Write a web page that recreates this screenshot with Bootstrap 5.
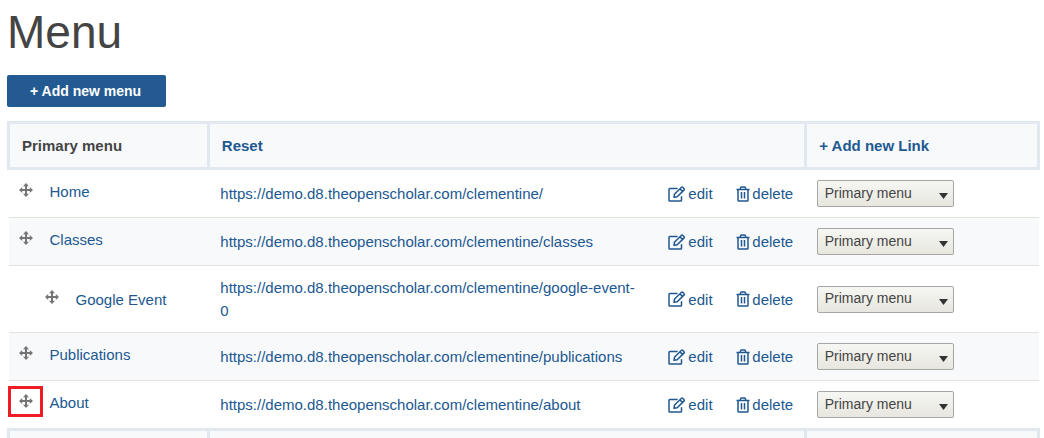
<!DOCTYPE html>
<html lang="en">
<head>
<meta charset="utf-8">
<meta name="viewport" content="width=device-width, initial-scale=1">
<title>Menu</title>
<link href="https://cdn.jsdelivr.net/npm/bootstrap@5.3.0/dist/css/bootstrap.min.css" rel="stylesheet">
<style>
  body { font: 15px/23px "Liberation Sans", Arial, sans-serif; color: #444; background: #fff; }
  main { padding: 5px 4px 0 7px; }
  h1 { font-size: 46px; font-weight: 400; line-height: 54px; }
  a, a:hover { color: #205891; text-decoration: none; }
  .btn-add, .btn-add:hover { background: #235a91; border: 0; border-radius: 2px; color: #fff; font-size: 14px; font-weight: 700; line-height: 20px; padding: 6px 25px 6px 23px; }
  .toolbar { margin-bottom: 14px; }
  .menu-table { border-collapse: collapse; table-layout: fixed; margin: 0; }
  .menu-table th { border: 3px solid #e1e8f0; background: #f8f9fb; padding: 10px 12px; height: 46px; vertical-align: middle; }
  .menu-table td { padding: 10px 0 10px 12px; vertical-align: middle; }
  .menu-table td:nth-child(2) { padding-right: 14px; overflow-wrap: break-word; }
  .menu-table td:last-child { padding-left: 11px; }
  .menu-table tbody tr + tr td { border-top: 1px solid #e2e2de; }
  .menu-table tbody tr:nth-child(even) td { background: #f8f9fb; }
  .menu-table tbody td:first-child { padding-left: 10px; }
  .menu-table tbody .top { vertical-align: top; }
  .menu-table tbody td.indent { padding-left: 36px; }
  .col-title { width: 19.4%; }
  .col-url { width: 43.5%; }
  .col-edit { width: 6.6%; }
  .col-delete { width: 7.9%; }
  .handle { width: 14px; height: 14px; margin: 0 17px 4px 0; color: #757575; }
  .handle svg, .action svg { display: block; flex: none; }
  .action { gap: 2px; }
  .marked::after { content: ""; position: absolute; inset: -8px -10px -9px -11px; border: 3px solid #ee1c25; }
  .parent { width: 137px; height: 27px; padding: 0 7px 2px; border: 1px solid #a6a6a6; border-radius: 2px; color: #444; font-size: 14px; line-height: 20px; appearance: none;
    background: url("data:image/svg+xml,%3Csvg xmlns='http://www.w3.org/2000/svg' width='9' height='6'%3E%3Cpath d='M0 0h9L4.500 6z' fill='%23333'/%3E%3C/svg%3E") no-repeat right 5px top 12px, linear-gradient(#f6f6f3, #e7e7df); display: block; }
</style>
</head>
<body class="vh-100 overflow-hidden">
<svg class="d-none" aria-hidden="true">
  <symbol id="move" viewBox="0 0 14 14"><path fill="currentColor" d="M7 0l3 3.200H8V6h2.800V4L14 7l-3.200 3V8H8v2.800h2L7 14l-3-3.200h2V8H3.200v2L0 7l3.200-3v2H6V3.200H4z"/></symbol>
  <symbol id="pen" viewBox="0 0 18 16"><g fill="none" stroke="currentColor" stroke-width="1.500" stroke-linejoin="round" stroke-linecap="round"><path d="M9 2.500H1.800Q1 2.500 1 3.300v10.900q0 .8.800.8h10.900q.8 0 .8-.8v-3.500"/><path d="M6 11.300l.6-3.300 6.700-6.500q.8-.8 1.600 0l1 1q.8.8 0 1.600L9.200 10.700zM12 2.900l2.400 2.400"/></g></symbol>
  <symbol id="trash" viewBox="0 0 14 16"><path fill="none" stroke="currentColor" stroke-width="1.500" stroke-linejoin="round" d="M.5 3.500h13M4 3.300L5 1h4l1 2.300M2 3.500v10.700q0 .8.800.8h8.400q.8 0 .8-.8V3.500M5.500 6v6.500M8.500 6v6.500"/></symbol>
</svg>
<main>
  <h1 class="mb-3">Menu</h1>
  <div class="toolbar d-flex"><button type="button" class="btn btn-add">+ Add new menu</button></div>
  <table class="menu-table w-100">
    <colgroup><col class="col-title"><col class="col-url"><col class="col-edit"><col class="col-delete"><col></colgroup>
    <thead>
      <tr><th scope="col">Primary menu</th><th colspan="3"><a href="#">Reset</a></th><th><a href="#">+ Add new Link</a></th></tr>
    </thead>
    <tbody>
      <tr>
        <td class="top"><div class="d-flex align-items-center"><span class="handle"><svg width="14" height="14"><use href="#move"/></svg></span><a href="#">Home</a></div></td>
        <td><a href="#">https://demo.d8.theopenscholar.com/clementine/</a></td>
        <td><a href="#" class="action d-flex align-items-center"><svg width="18" height="16"><use href="#pen"/></svg>edit</a></td>
        <td><a href="#" class="action d-flex align-items-center"><svg width="14" height="16"><use href="#trash"/></svg>delete</a></td>
        <td><select class="parent" aria-label="Menu for Home"><option>Primary menu</option></select></td>
      </tr>
      <tr>
        <td class="top"><div class="d-flex align-items-center"><span class="handle"><svg width="14" height="14"><use href="#move"/></svg></span><a href="#">Classes</a></div></td>
        <td><a href="#">https://demo.d8.theopenscholar.com/clementine/classes</a></td>
        <td><a href="#" class="action d-flex align-items-center"><svg width="18" height="16"><use href="#pen"/></svg>edit</a></td>
        <td><a href="#" class="action d-flex align-items-center"><svg width="14" height="16"><use href="#trash"/></svg>delete</a></td>
        <td><select class="parent" aria-label="Menu for Classes"><option>Primary menu</option></select></td>
      </tr>
      <tr>
        <td class="indent"><div class="d-flex align-items-center"><span class="handle"><svg width="14" height="14"><use href="#move"/></svg></span><a href="#">Google Event</a></div></td>
        <td><a href="#">https://demo.d8.theopenscholar.com/clementine/google-event-<wbr>0</a></td>
        <td><a href="#" class="action d-flex align-items-center"><svg width="18" height="16"><use href="#pen"/></svg>edit</a></td>
        <td><a href="#" class="action d-flex align-items-center"><svg width="14" height="16"><use href="#trash"/></svg>delete</a></td>
        <td><select class="parent" aria-label="Menu for Google Event"><option>Primary menu</option></select></td>
      </tr>
      <tr>
        <td class="top"><div class="d-flex align-items-center"><span class="handle"><svg width="14" height="14"><use href="#move"/></svg></span><a href="#">Publications</a></div></td>
        <td><a href="#">https://demo.d8.theopenscholar.com/clementine/publications</a></td>
        <td><a href="#" class="action d-flex align-items-center"><svg width="18" height="16"><use href="#pen"/></svg>edit</a></td>
        <td><a href="#" class="action d-flex align-items-center"><svg width="14" height="16"><use href="#trash"/></svg>delete</a></td>
        <td><select class="parent" aria-label="Menu for Publications"><option>Primary menu</option></select></td>
      </tr>
      <tr>
        <td class="top"><div class="d-flex align-items-center"><span class="handle marked position-relative"><svg width="14" height="14"><use href="#move"/></svg></span><a href="#">About</a></div></td>
        <td><a href="#">https://demo.d8.theopenscholar.com/clementine/about</a></td>
        <td><a href="#" class="action d-flex align-items-center"><svg width="18" height="16"><use href="#pen"/></svg>edit</a></td>
        <td><a href="#" class="action d-flex align-items-center"><svg width="14" height="16"><use href="#trash"/></svg>delete</a></td>
        <td><select class="parent" aria-label="Menu for About"><option>Primary menu</option></select></td>
      </tr>
    </tbody>
    <tfoot>
      <tr><th></th><th colspan="3"></th><th></th></tr>
    </tfoot>
  </table>
</main>
<script src="https://cdn.jsdelivr.net/npm/bootstrap@5.3.0/dist/js/bootstrap.bundle.min.js"></script>
</body>
</html>
